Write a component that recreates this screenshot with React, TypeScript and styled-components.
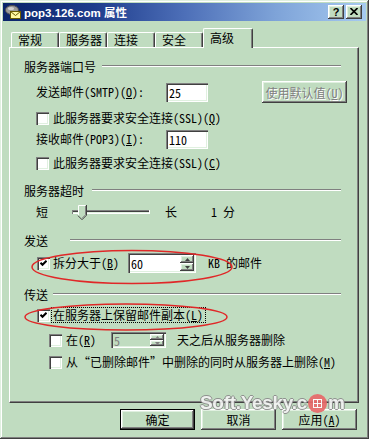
import React from "react";
import styled, { createGlobalStyle, css } from "styled-components";

const GREEN = "#c0dcc0";
const LIGHT = "#e0f0e0";
const CJK = `"Noto Sans Mono CJK SC", "Noto Sans CJK SC", sans-serif`;

const GlobalStyle = createGlobalStyle`
  html, body { margin: 0; padding: 0; background: ${GREEN}; }
  body { width: 369px; height: 439px; overflow: hidden; }
`;

const raised = css`
  box-shadow: inset -1px -1px 0 #404040, inset 1px 1px 0 #ffffff,
    inset -2px -2px 0 #808080, inset 2px 2px 0 ${LIGHT};
`;

const sunken = css`
  box-shadow: inset 1px 1px 0 #808080, inset 2px 2px 0 #404040,
    inset -1px -1px 0 #ffffff, inset -2px -2px 0 ${LIGHT};
`;

const Window = styled.div`
  position: relative;
  box-sizing: border-box;
  width: 369px;
  height: 439px;
  padding: 3px;
  background: ${GREEN};
  display: flex;
  flex-direction: column;
  font-family: ${CJK};
  font-size: 12px;
  color: #000;
  box-shadow: inset -1px -1px 0 #404040, inset 1px 1px 0 ${LIGHT},
    inset -2px -2px 0 #808080, inset 2px 2px 0 #ffffff;
`;

const TitleBar = styled.div`
  height: 18px;
  flex: none;
  display: flex;
  align-items: center;
  padding: 0 4px 0 2px;
  background: linear-gradient(to right, #0a246a 0%, #1e3c8c 25%, #4d6fb8 50%, #7ea3d8 75%, #a6caf0 100%);
  color: #fff;
`;

const TitleText = styled.span`
  margin-left: 3px;
  flex: 1;
  font: bold 11.5px "Liberation Sans", "Noto Sans CJK SC", sans-serif;
  white-space: nowrap;
`;

const CaptionButtons = styled.div`
  display: flex;
  gap: 2px;
`;

const CaptionButton = styled.div`
  box-sizing: border-box;
  width: 16px;
  height: 14px;
  background: ${GREEN};
  ${raised};
  display: flex;
  align-items: center;
  justify-content: center;
  font: bold 11px "Liberation Sans", sans-serif;
  color: #000;
  padding-bottom: 1px;
`;

const Client = styled.div`
  flex: 1;
  display: flex;
  flex-direction: column;
  padding: 7px 7px 0 6px;
`;

const TabStrip = styled.div`
  height: 19px;
  flex: none;
  display: flex;
  align-items: flex-end;
  padding-left: 2px;
`;

const Tab = styled.div<{ $active?: boolean }>`
  box-sizing: border-box;
  position: relative;
  z-index: ${(p) => (p.$active ? 1 : 0)};
  width: ${(p) => (p.$active ? 50 : 48)}px;
  height: ${(p) => (p.$active ? 20 : 15)}px;
  margin-bottom: ${(p) => (p.$active ? -1 : 0)}px;
  padding-left: 6px;
  line-height: ${(p) => (p.$active ? 17 : 13)}px;
  background: ${GREEN};
  border-top: 1px solid #fff;
  border-left: 1px solid #fff;
  border-right: 1px solid #404040;
  border-radius: 2px 2px 0 0;
  box-shadow: inset -1px 0 0 #808080;
  white-space: nowrap;
`;

const Panel = styled.div`
  box-sizing: border-box;
  width: 350px;
  height: 356px;
  flex: none;
  padding: 8px 10px 0 14px;
  display: flex;
  flex-direction: column;
  border-top: 1px solid #fff;
  border-left: 1px solid #fff;
  border-right: 1px solid #404040;
  border-bottom: 1px solid #404040;
  box-shadow: inset -1px -1px 0 #808080;
`;

const Header = styled.div<{ $mt: number }>`
  height: 20px;
  margin-top: ${(p) => p.$mt}px;
  display: flex;
  align-items: center;
  white-space: nowrap;
`;

const Rule = styled.div<{ $gap: number }>`
  flex: 1;
  height: 0;
  margin-left: ${(p) => p.$gap}px;
  margin-right: 7px;
  border-top: 1px solid #808080;
  border-bottom: 1px solid #ffffff;
`;

const Row = styled.div<{ $mt: number; $indent: number }>`
  height: 20px;
  margin-top: ${(p) => p.$mt}px;
  padding-left: ${(p) => p.$indent}px;
  display: flex;
  align-items: center;
  white-space: nowrap;
  & > * {
    flex-shrink: 0;
  }
`;

const Text = styled.span<{ $ml?: number; $w?: number; $focus?: boolean }>`
  margin-left: ${(p) => p.$ml ?? 0}px;
  ${(p) => (p.$w ? `width: ${p.$w}px;` : "")}
  line-height: 14px;
  ${(p) =>
    p.$focus
      ? `outline: 1px dotted #000; outline-offset: 0px; padding: 0 2px 0 1px; margin-left: ${(p.$ml ?? 0) - 1}px;`
      : ""}
`;

const Box = styled.span`
  box-sizing: border-box;
  width: 13px;
  height: 13px;
  background: #fff;
  ${sunken};
  display: flex;
  align-items: center;
  justify-content: center;
`;

const Field = styled.div<{ $w: number; $h: number; $ml?: number; $disabled?: boolean }>`
  box-sizing: border-box;
  width: ${(p) => p.$w}px;
  height: ${(p) => p.$h}px;
  margin-left: ${(p) => p.$ml ?? 0}px;
  padding: 2px;
  background: ${(p) => (p.$disabled ? GREEN : "#fff")};
  ${sunken};
  display: flex;
  align-items: stretch;
`;

const FieldText = styled.span<{ $disabled?: boolean }>`
  flex: 1;
  display: flex;
  align-items: center;
  padding-left: 1px;
  color: ${(p) => (p.$disabled ? "#808080" : "#000")};
`;

const SpinButtons = styled.div`
  width: 14px;
  display: flex;
  flex-direction: column;
`;

const SpinButton = styled.div`
  box-sizing: border-box;
  flex: 1;
  background: ${GREEN};
  ${raised};
  display: flex;
  align-items: center;
  justify-content: center;
`;

const PushButton = styled.div<{ $w: number; $h: number; $ml?: number; $default?: boolean; $disabled?: boolean }>`
  box-sizing: border-box;
  width: ${(p) => p.$w}px;
  height: ${(p) => p.$h}px;
  margin-left: ${(p) => p.$ml ?? 0}px;
  background: ${GREEN};
  display: flex;
  align-items: center;
  justify-content: center;
  white-space: nowrap;
  color: ${(p) => (p.$disabled ? "#808080" : "#000")};
  ${(p) => (p.$disabled ? "text-shadow: 1px 1px 0 #ffffff;" : "")}
  ${(p) =>
    p.$default
      ? `border: 1px solid #000; box-shadow: inset -1px -1px 0 #404040, inset 1px 1px 0 #ffffff, inset -2px -2px 0 #808080, inset 2px 2px 0 ${LIGHT};`
      : `box-shadow: inset -1px -1px 0 #404040, inset 1px 1px 0 #ffffff, inset -2px -2px 0 #808080, inset 2px 2px 0 ${LIGHT};`}
`;

const ButtonRow = styled.div`
  display: flex;
  justify-content: flex-end;
  gap: 6px;
  margin-top: 6px;
  padding-right: 2px;
`;

const Overlay = styled.svg`
  position: absolute;
  left: 0;
  top: 0;
  pointer-events: none;
`;

const Watermark = styled.div`
  position: absolute;
  left: 200px;
  top: 392px;
  display: flex;
  align-items: center;
  font: bold 19px "Liberation Sans", sans-serif;
  letter-spacing: -0.3px;
  color: #f4f4f4;
  opacity: 0.92;
  text-shadow: 1px 0 0 #8a8a8a, -1px 0 0 #8a8a8a, 0 1px 0 #8a8a8a, 0 -1px 0 #8a8a8a;
  pointer-events: none;
`;

const WatermarkDot = styled.span`
  width: 19px;
  height: 19px;
  border-radius: 50%;
  background: #e86a6a;
  display: flex;
  align-items: center;
  justify-content: center;
  margin: 0 1px;
`;

const Check = () => (
  <svg width="7" height="7" viewBox="0 0 7 7">
    <path d="M0.5 2.8 L2.5 4.8 L6.5 0.8" stroke="#000" strokeWidth="2" fill="none" />
  </svg>
);

const CheckBox: React.FC<{ checked?: boolean }> = ({ checked }) => <Box>{checked ? <Check /> : null}</Box>;

const Arrow: React.FC<{ up?: boolean; disabled?: boolean }> = ({ up, disabled }) => (
  <svg width="5" height="3" viewBox="0 0 5 3">
    <path d={up ? "M2.5 0 L5 3 L0 3 Z" : "M0 0 L5 0 L2.5 3 Z"} fill={disabled ? "#808080" : "#404040"} />
  </svg>
);

const Spinner: React.FC<{ value: string; w: number; h: number; ml?: number; disabled?: boolean }> = ({
  value,
  w,
  h,
  ml,
  disabled,
}) => (
  <Field $w={w} $h={h} $ml={ml} $disabled={disabled}>
    <FieldText $disabled={disabled}>{value}</FieldText>
    <SpinButtons>
      <SpinButton>
        <Arrow up disabled={disabled} />
      </SpinButton>
      <SpinButton>
        <Arrow disabled={disabled} />
      </SpinButton>
    </SpinButtons>
  </Field>
);

const Slider = () => (
  <svg width="80" height="20" viewBox="0 0 80 20" style={{ marginLeft: 24 }}>
    <line x1="0" y1="8.5" x2="78" y2="8.5" stroke="#808080" />
    <line x1="1" y1="9.5" x2="77" y2="9.5" stroke="#404040" />
    <line x1="1" y1="10.5" x2="77" y2="10.5" stroke={LIGHT} />
    <line x1="0" y1="11.5" x2="78" y2="11.5" stroke="#ffffff" />
    <line x1="0.5" y1="8" x2="0.5" y2="12" stroke="#808080" />
    <line x1="77.5" y1="8" x2="77.5" y2="12" stroke="#ffffff" />
    <polygon points="6,3 14,3 14,13 10,17 6,13" fill={GREEN} />
    <polyline points="6.5,13 6.5,3.5 13.5,3.5" stroke="#ffffff" fill="none" />
    <polyline points="14.5,3 14.5,13.2 10,17.7 6,13.7" stroke="#404040" fill="none" />
    <polyline points="13.5,4 13.5,12.8 10,16.3" stroke="#808080" fill="none" />
  </svg>
);

const MailIcon = () => (
  <svg width="16" height="14" viewBox="0 0 16 14">
    <ellipse cx="7" cy="5" rx="6.5" ry="4.5" fill="#9a9a9a" stroke="#505050" />
    <ellipse cx="6" cy="3.5" rx="3" ry="1.5" fill="#d0d0d0" />
    <rect x="5.5" y="6.5" width="10" height="7" fill="#fff8a0" stroke="#6a5a00" />
    <path d="M5.5 6.5 L10.5 10.5 L15.5 6.5" stroke="#6a5a00" fill="none" />
  </svg>
);

const CloseGlyph = () => (
  <svg width="8" height="7" viewBox="0 0 8 7">
    <path d="M0.5 0 L7.5 7 M7.5 0 L0.5 7" stroke="#000" strokeWidth="1.6" />
  </svg>
);

const tabs = ["常规", "服务器", "连接", "安全", "高级"];

export default function App() {
  return (
    <>
      <GlobalStyle />
      <Window>
        <TitleBar>
          <MailIcon />
          <TitleText>pop3.126.com 属性</TitleText>
          <CaptionButtons>
            <CaptionButton>?</CaptionButton>
            <CaptionButton>
              <CloseGlyph />
            </CaptionButton>
          </CaptionButtons>
        </TitleBar>
        <Client>
          <TabStrip>
            {tabs.map((t) => (
              <Tab key={t} $active={t === "高级"}>
                {t}
              </Tab>
            ))}
          </TabStrip>
          <Panel>
            <Header $mt={0}>
              <span>服务器端口号</span>
              <Rule $gap={6} />
            </Header>
            <Row $mt={6} $indent={12}>
              <Text $w={130}>
                发送邮件(SMTP)(<u>O</u>):
              </Text>
              <Field $w={42} $h={19}>
                <FieldText>25</FieldText>
              </Field>
              <PushButton $w={85} $h={22} $ml={54} $disabled>
                使用默认值(<u>U</u>)
              </PushButton>
            </Row>
            <Row $mt={6} $indent={12}>
              <CheckBox />
              <Text $ml={4}>
                此服务器要求安全连接(SSL)(<u>Q</u>)
              </Text>
            </Row>
            <Row $mt={1} $indent={12}>
              <Text $w={130}>
                接收邮件(POP3)(<u>I</u>):
              </Text>
              <Field $w={42} $h={19}>
                <FieldText>110</FieldText>
              </Field>
            </Row>
            <Row $mt={4} $indent={12}>
              <CheckBox />
              <Text $ml={4}>
                此服务器要求安全连接(SSL)(<u>C</u>)
              </Text>
            </Row>
            <Header $mt={7}>
              <span>服务器超时</span>
              <Rule $gap={8} />
            </Header>
            <Row $mt={2} $indent={12}>
              <Text>短</Text>
              <Slider />
              <Text $ml={13}>长</Text>
              <Text $ml={34}>1 分</Text>
            </Row>
            <Header $mt={8}>
              <span>发送</span>
              <Rule $gap={22} />
            </Header>
            <Row $mt={3} $indent={13}>
              <CheckBox checked />
              <Text $ml={3}>
                拆分大于(<u>B</u>)
              </Text>
              <Spinner value="60" w={68} h={20} ml={9} />
              <Text $ml={12}>KB 的邮件</Text>
            </Row>
            <Header $mt={11}>
              <span>传送</span>
              <Rule $gap={5} />
            </Header>
            <Row $mt={1} $indent={13}>
              <CheckBox checked />
              <Text $ml={3} $focus>
                在服务器上保留邮件副本(<u>L</u>)
              </Text>
            </Row>
            <Row $mt={5} $indent={25}>
              <CheckBox />
              <Text $ml={4}>
                在(<u>R</u>)
              </Text>
              <Spinner value="5" w={55} h={16} ml={15} disabled />
              <Text $ml={11}>天之后从服务器删除</Text>
            </Row>
            <Row $mt={2} $indent={25}>
              <CheckBox />
              <Text $ml={4}>
                从“已删除邮件”中删除的同时从服务器上删除(<u>M</u>)
              </Text>
            </Row>
          </Panel>
          <ButtonRow>
            <PushButton $w={75} $h={21} $default>
              确定
            </PushButton>
            <PushButton $w={75} $h={21}>
              取消
            </PushButton>
            <PushButton $w={75} $h={21}>
              应用(<u>A</u>)
            </PushButton>
          </ButtonRow>
        </Client>
        <Overlay width="369" height="439" viewBox="0 0 369 439">
          <ellipse cx="132" cy="267" rx="100" ry="16.5" fill="none" stroke="#e02828" strokeWidth="1.5" />
          <ellipse cx="126" cy="317" rx="101" ry="13" fill="none" stroke="#e02828" strokeWidth="1.5" />
        </Overlay>
        <Watermark>
          <span>Soft.Yesky.c</span>
          <WatermarkDot>
            <svg width="9" height="9" viewBox="0 0 9 9">
              <rect x="0.5" y="0.5" width="8" height="8" fill="none" stroke="#fff" />
              <path d="M0.5 4.5 H8.5 M4.5 0.5 V8.5" stroke="#fff" />
            </svg>
          </WatermarkDot>
          <span>m</span>
        </Watermark>
      </Window>
    </>
  );
}
